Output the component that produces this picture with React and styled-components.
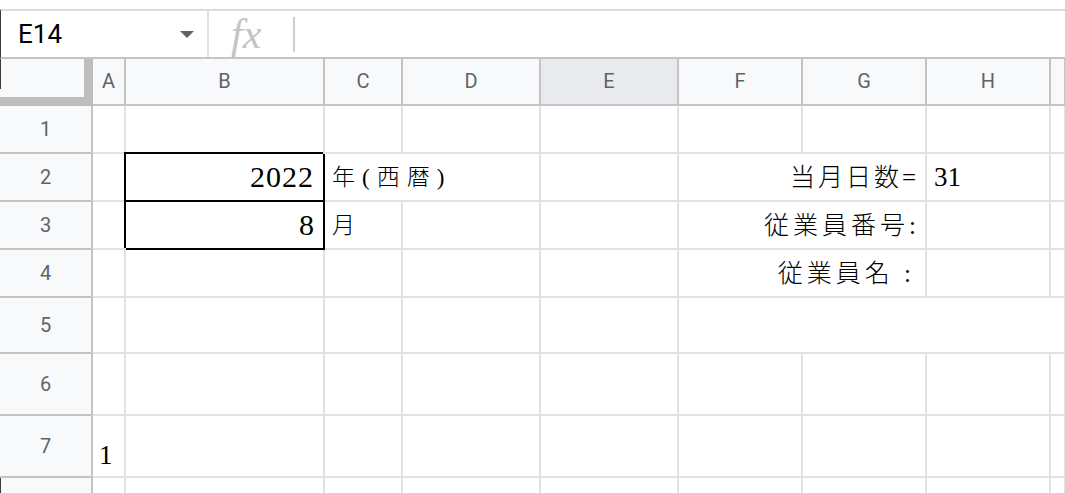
import React from "react";
import styled, { createGlobalStyle } from "styled-components";

const Global = createGlobalStyle`
  html, body { margin: 0; padding: 0; background: #fff; }
  body { font-family: Roboto, "Noto Sans", sans-serif; overflow: hidden; }
`;

const Page = styled.div`
  width: 1065px;
  height: 493px;
  overflow: hidden;
  background: #fff;
  padding-top: 9px;
  box-sizing: border-box;
`;

const FormulaBar = styled.div`
  display: flex;
  align-items: stretch;
  height: 50px;
  box-sizing: border-box;
  border-top: 2px solid #dadce0;
  border-bottom: 2px solid #c4c4c4;
  border-left: 1px solid #3a3a3a;
`;

const NameBox = styled.div`
  width: 206px;
  display: flex;
  align-items: center;
  justify-content: space-between;
  padding: 0 13px 0 17px;
  box-sizing: border-box;
  font-family: Roboto, "Liberation Sans", sans-serif;
  font-size: 26px;
  color: #000;
`;

const Divider = styled.div`
  width: 2px;
  background: ${(p) => p.$color || "#e0e0e0"};
  margin: ${(p) => p.$inset || "0"};
`;

const FxBox = styled.div`
  width: 84px;
  display: flex;
  align-items: center;
  padding-left: 22px;
  box-sizing: border-box;
  font-family: "Liberation Serif", "DejaVu Serif", serif;
  font-style: italic;
  font-size: 42px;
  line-height: 46px;
  color: #c4c4c4;
  white-space: nowrap;
`;

const Sheet = styled.div`
  display: grid;
  grid-template-columns: 93px 33px 199px 78px 138px 138px 124px 124px 124px 1fr;
  grid-template-rows: 47px 48px 48px 48px 48px 56px 62px 62px 48px;
`;

const Corner = styled.div`
  box-sizing: border-box;
  background: linear-gradient(#3a3a3a, #3a3a3a) 0 0 / 1px 30px no-repeat, #f8f9fa;
  border-right: 9px solid #bdbdbd;
  border-bottom: 9px solid #bdbdbd;
`;

const ColHeader = styled.div`
  box-sizing: border-box;
  display: flex;
  align-items: center;
  justify-content: center;
  background: ${(p) => (p.$selected ? "#e8eaed" : "#f8f9fa")};
  border-right: 2px solid #c4c4c4;
  border-bottom: 2px solid #c4c4c4;
  font-family: Roboto, "Liberation Sans", sans-serif;
  font-size: 20px;
  color: #5f6368;
  padding-bottom: 1px;
`;

const RowHeader = styled.div`
  box-sizing: border-box;
  display: flex;
  align-items: center;
  justify-content: center;
  background: ${(p) =>
    p.$edge
      ? "linear-gradient(#3a3a3a, #3a3a3a) 0 0 / 1px 100% no-repeat, #f8f9fa"
      : "#f8f9fa"};
  border-right: 2px solid #c4c4c4;
  border-bottom: 2px solid #c4c4c4;
  font-family: Roboto, "Liberation Sans", sans-serif;
  font-size: 20px;
  color: #5f6368;
`;

const Cell = styled.div`
  box-sizing: border-box;
  display: flex;
  align-items: ${(p) => (p.$bottom ? "flex-end" : "center")};
  justify-content: ${(p) => (p.$right ? "flex-end" : "flex-start")};
  grid-column: ${(p) => (p.$span ? `span ${p.$span}` : "auto")};
  border-right: 2px solid ${(p) => (p.$boxed ? "#000" : "#e2e2e2")};
  border-bottom: 2px solid ${(p) => (p.$boxed ? "#000" : "#e2e2e2")};
  box-shadow: ${(p) => (p.$boxed ? "-2px -2px 0 0 #000" : "none")};
  padding: ${(p) => (p.$bottom ? "0 6px 7px" : p.$right ? `0 ${p.$pr ?? 8}px 0 6px` : "0 6px 0 7px")};
  font-family: "Liberation Serif", "Noto Sans CJK JP", serif;
  font-weight: 300;
  font-size: ${(p) => p.$size || 23}px;
  letter-spacing: ${(p) => p.$ls || 0}px;
  line-height: 1;
  color: #000;
  white-space: nowrap;
  overflow: hidden;
`;

const Dropdown = () => (
  <svg width="14" height="7" viewBox="0 0 14 7">
    <polygon points="0,0 14,0 7,7" fill="#5f6368" />
  </svg>
);

const COLS = ["A", "B", "C", "D", "E", "F", "G", "H", ""];

const empty = (n, k) =>
  Array.from({ length: n }, (_, i) => <Cell key={`${k}-${i}`} />);

export default function App() {
  return (
    <>
      <Global />
      <Page>
        <FormulaBar>
          <NameBox>
            <span>E14</span>
            <Dropdown />
          </NameBox>
          <Divider />
          <FxBox>fx</FxBox>
          <Divider $color="#cfcfcf" $inset="6px 0 5px" />
        </FormulaBar>
        <Sheet>
          <Corner />
          {COLS.map((c, i) => (
            <ColHeader key={`h${i}`} $selected={c === "E"}>
              {c}
            </ColHeader>
          ))}

          <RowHeader>1</RowHeader>
          {empty(9, "r1")}

          <RowHeader>2</RowHeader>
          <Cell />
          <Cell $boxed $right $size={30} $ls={1} $pr={9}>2022</Cell>
          <Cell $span={2} $size={23} $ls={7}>年(西暦)</Cell>
          <Cell />
          <Cell $span={2} $right $size={25} $ls={3} $pr={6}>当月日数=</Cell>
          <Cell $size={27}>31</Cell>
          <Cell />

          <RowHeader>3</RowHeader>
          <Cell />
          <Cell $boxed $right $size={30} $pr={9}>8</Cell>
          <Cell $size={23}>月</Cell>
          <Cell />
          <Cell />
          <Cell $span={2} $right $size={25} $ls={4} $pr={5}>従業員番号:</Cell>
          <Cell />
          <Cell />

          <RowHeader>4</RowHeader>
          {empty(5, "r4")}
          <Cell $span={2} $right $size={25} $ls={4} $pr={10}>従業員名 :</Cell>
          <Cell />
          <Cell />

          <RowHeader>5</RowHeader>
          {empty(5, "r5")}
          <Cell $span={4} />

          <RowHeader>6</RowHeader>
          {empty(9, "r6")}

          <RowHeader>7</RowHeader>
          <Cell $bottom $size={27}>1</Cell>
          {empty(8, "r7")}

          <RowHeader $edge />
          {empty(9, "r8")}
        </Sheet>
      </Page>
    </>
  );
}
